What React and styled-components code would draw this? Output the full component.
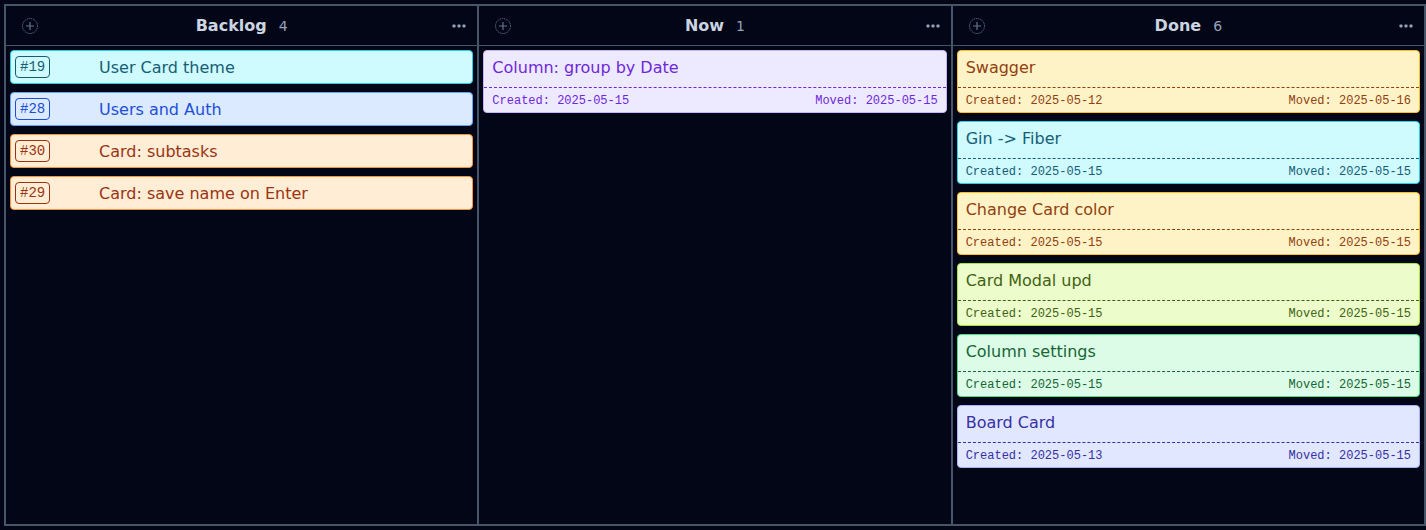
import styled, { createGlobalStyle } from 'styled-components';

const GlobalStyle = createGlobalStyle`
	html, body {
		margin: 0;
		height: 100%;
		background: #020617;
	}
	#root {
		height: 100%;
	}
	* {
		box-sizing: border-box;
	}
`;

const THEMES = {
	cyan: { bg: '#cffafe', border: '#22d3ee', text: '#155e75' },
	blue: { bg: '#dbeafe', border: '#60a5fa', text: '#1d4ed8' },
	orange: { bg: '#ffedd5', border: '#fb923c', text: '#9a3412' },
	violet: { bg: '#ede9fe', border: '#c4b5fd', text: '#6d28d9' },
	amber: { bg: '#fef3c7', border: '#fbbf24', text: '#92400e' },
	lime: { bg: '#ecfccb', border: '#a3e635', text: '#3f6212' },
	green: { bg: '#dcfce7', border: '#4ade80', text: '#166534' },
	indigo: { bg: '#e0e7ff', border: '#a5b4fc', text: '#3730a3' },
};

const COLUMNS = [
	{
		title: 'Backlog',
		compact: true,
		cards: [
			{ id: 19, name: 'User Card theme', color: 'cyan' },
			{ id: 28, name: 'Users and Auth', color: 'blue' },
			{ id: 30, name: 'Card: subtasks', color: 'orange' },
			{ id: 29, name: 'Card: save name on Enter', color: 'orange' },
		],
	},
	{
		title: 'Now',
		cards: [
			{ id: 31, name: 'Column: group by Date', color: 'violet', created: '2025-05-15', moved: '2025-05-15' },
		],
	},
	{
		title: 'Done',
		cards: [
			{ id: 1, name: 'Swagger', color: 'amber', created: '2025-05-12', moved: '2025-05-16' },
			{ id: 2, name: 'Gin -> Fiber', color: 'cyan', created: '2025-05-15', moved: '2025-05-15' },
			{ id: 3, name: 'Change Card color', color: 'amber', created: '2025-05-15', moved: '2025-05-15' },
			{ id: 4, name: 'Card Modal upd', color: 'lime', created: '2025-05-15', moved: '2025-05-15' },
			{ id: 5, name: 'Column settings', color: 'green', created: '2025-05-15', moved: '2025-05-15' },
			{ id: 6, name: 'Board Card', color: 'indigo', created: '2025-05-13', moved: '2025-05-15' },
		],
	},
];

const Page = styled.div`
	height: 100%;
	padding: 4px 0 4px 4px;
	font-family: "DejaVu Sans", "Noto Sans", sans-serif;
`;

const Board = styled.div`
	display: grid;
	grid-template-columns: 1fr 1fr 1fr;
	height: 100%;
	border: 1px solid #475569;
`;

const Column = styled.section`
	display: flex;
	flex-direction: column;
	min-width: 0;
	border: 1px solid #475569;
`;

const ColumnHeader = styled.header`
	display: grid;
	grid-template-columns: 1fr auto 1fr;
	align-items: center;
	height: 40px;
	padding: 0 9px 0 15px;
	border-bottom: 1px solid #475569;
`;

const IconButton = styled.button`
	display: flex;
	align-items: center;
	justify-content: center;
	justify-self: ${({ $end }) => ($end ? 'end' : 'start')};
	width: 18px;
	height: 18px;
	padding: 0;
	border: none;
	background: none;
	color: #64748b;
	cursor: pointer;
`;

const TitleGroup = styled.div`
	display: flex;
	align-items: baseline;
	gap: 12px;
	margin-left: -6px;
`;

const Title = styled.h2`
	margin: 0;
	font-size: 16px;
	font-weight: 700;
	color: #cbd5e1;
`;

const Count = styled.span`
	font-size: 14px;
	color: #94a3b8;
`;

const CardList = styled.div`
	display: flex;
	flex-direction: column;
	gap: 8px;
	padding: 4px;
`;

const Card = styled.article`
	border: 1px solid ${({ $theme }) => $theme.border};
	border-radius: 4px;
	background: ${({ $theme }) => $theme.bg};
	color: ${({ $theme }) => $theme.text};
`;

const CompactRow = styled.div`
	display: grid;
	grid-template-columns: 80px 1fr;
	gap: 4px;
	align-items: center;
	height: 32px;
	padding: 0 4px;
`;

const Badge = styled.span`
	justify-self: start;
	padding: 0 4px;
	border: 1px solid currentColor;
	border-radius: 4px;
	font-family: "Liberation Mono", monospace;
	font-size: 14px;
	line-height: 20px;
`;

const CardTitle = styled.div`
	font-size: 16px;
	line-height: 20px;
	padding: ${({ $compact }) => ($compact ? '1px 0 0' : '7px 8px 9px')};
	white-space: nowrap;
	overflow: hidden;
	text-overflow: ellipsis;
`;

const CardFooter = styled.div`
	display: flex;
	justify-content: space-between;
	padding: 5px 8px 3px;
	border-top: 1px dashed currentColor;
	font-family: "Liberation Mono", monospace;
	font-size: 12px;
	line-height: 16px;
`;

const PlusIcon = () => (
	<svg width="18" height="18" viewBox="0 0 18 18" fill="none" stroke="currentColor">
		<circle cx="9" cy="9" r="7.5" strokeWidth="1" strokeDasharray="1.2 0.8" />
		<path d="M9 5v8M5 9h8" strokeWidth="1.2" />
	</svg>
);

const DotsIcon = () => (
	<svg width="14" height="4" viewBox="0 0 14 4" fill="#94a3b8">
		<rect x="0.5" y="0.5" width="3" height="3" rx="0.8" />
		<rect x="5.5" y="0.5" width="3" height="3" rx="0.8" />
		<rect x="10.5" y="0.5" width="3" height="3" rx="0.8" />
	</svg>
);

const TaskCard = ({ card, compact }) => {
	const theme = THEMES[card.color];
	if (compact) {
		return (
			<Card $theme={theme}>
				<CompactRow>
					<Badge>#{card.id}</Badge>
					<CardTitle $compact>{card.name}</CardTitle>
				</CompactRow>
			</Card>
		);
	}
	return (
		<Card $theme={theme}>
			<CardTitle>{card.name}</CardTitle>
			<CardFooter>
				<span>Created: {card.created}</span>
				<span>Moved: {card.moved}</span>
			</CardFooter>
		</Card>
	);
};

export default function App() {
	return (
		<>
			<GlobalStyle />
			<Page>
				<Board>
					{COLUMNS.map((column) => (
						<Column key={column.title}>
							<ColumnHeader>
								<IconButton aria-label="Add card"><PlusIcon /></IconButton>
								<TitleGroup>
									<Title>{column.title}</Title>
									<Count>{column.cards.length}</Count>
								</TitleGroup>
								<IconButton $end aria-label="Column menu"><DotsIcon /></IconButton>
							</ColumnHeader>
							<CardList>
								{column.cards.map((card) => (
									<TaskCard key={card.id} card={card} compact={column.compact} />
								))}
							</CardList>
						</Column>
					))}
				</Board>
			</Page>
		</>
	);
}
